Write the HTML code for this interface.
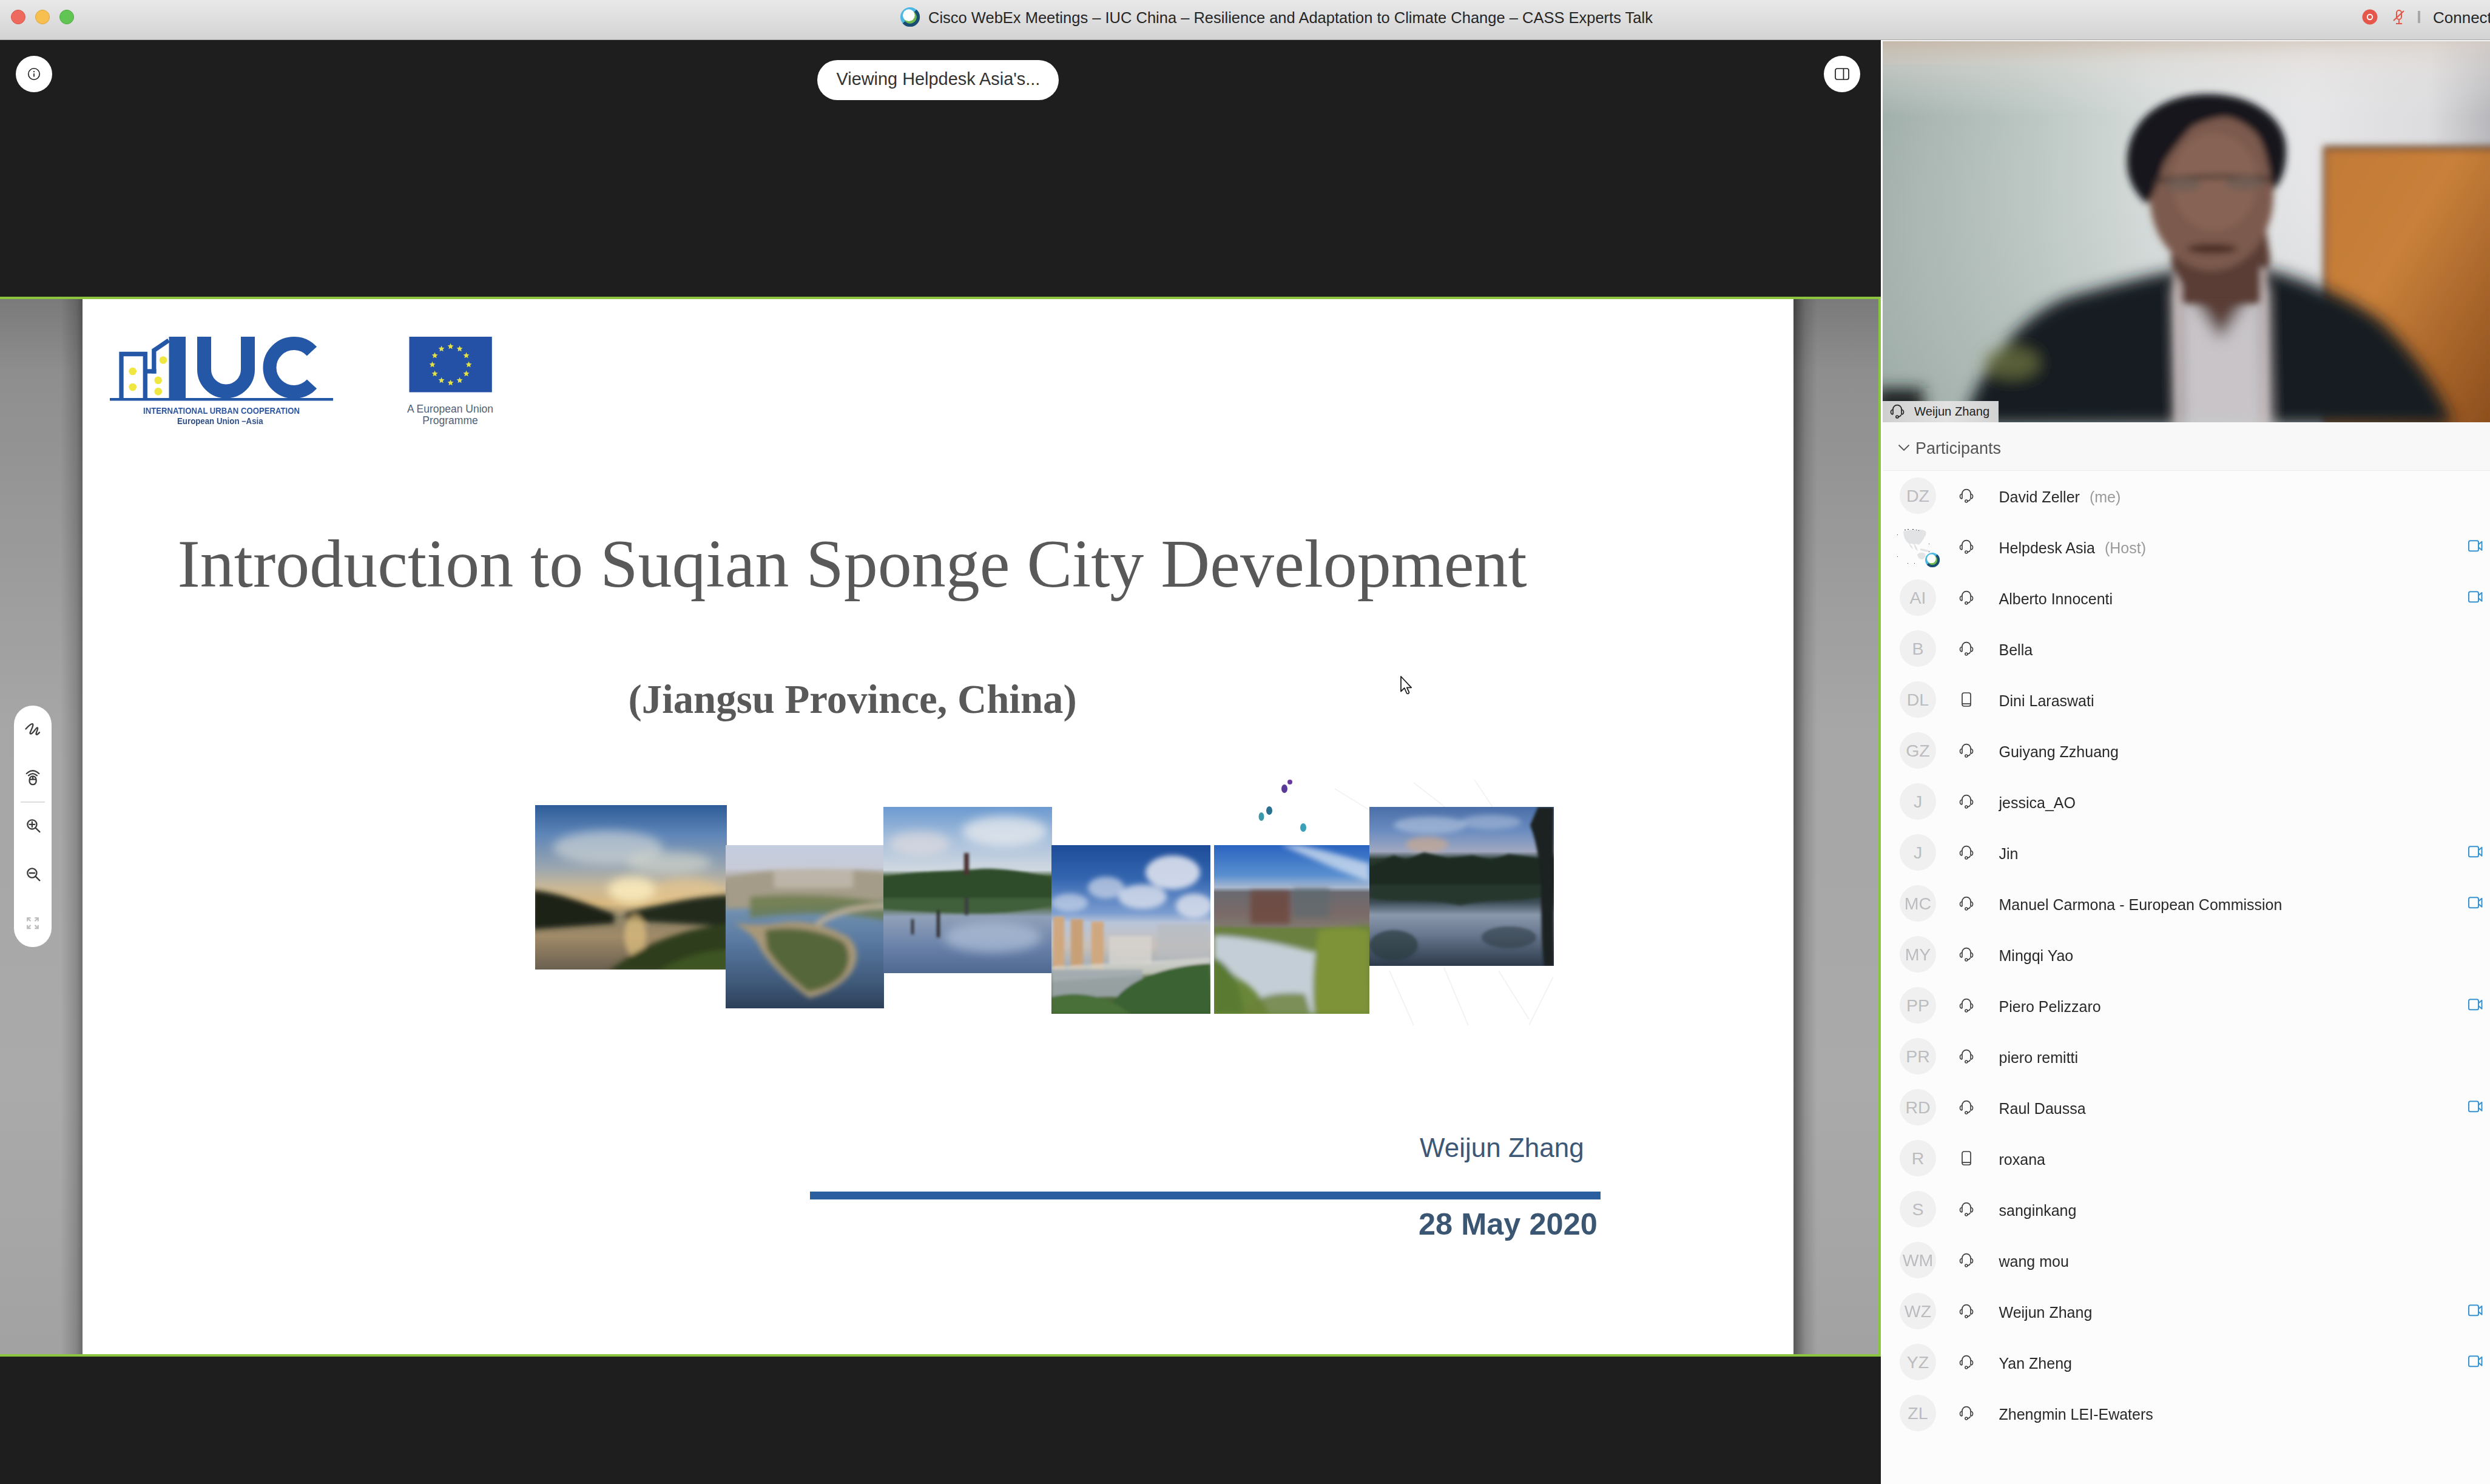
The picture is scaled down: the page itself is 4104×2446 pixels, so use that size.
<!DOCTYPE html>
<html><head><meta charset="utf-8">
<style>
*{box-sizing:border-box;margin:0;padding:0}
html,body{width:4104px;height:2446px;overflow:hidden;background:#1e1e1e;font-family:"Liberation Sans",sans-serif;position:relative}
.abs{position:absolute}
svg{position:absolute;overflow:visible}
#titlebar{left:0;top:0;width:4104px;height:66px;background:linear-gradient(#e9e9e9,#d3d3d3);border-bottom:1px solid #a9a9a9}
.tl{position:absolute;width:24px;height:24px;border-radius:50%;top:16px}
#ttl{left:1530px;top:14px;font-size:25.5px;color:#262626;white-space:nowrap;line-height:30px}
#connect{left:4010px;top:14px;font-size:26px;color:#262626;white-space:nowrap;line-height:30px}
#share{left:0;top:489px;width:3100px;height:1747px;border-top:4px solid #8bc43f;border-bottom:4px solid #8bc43f;border-right:4px solid #8bc43f;
 background:linear-gradient(90deg,rgba(0,0,0,0) 0,rgba(0,0,0,0) 100px,rgba(0,0,0,.18) 126px,rgba(0,0,0,.35) 136px,rgba(0,0,0,0) 2950px,rgba(0,0,0,.45) 2957px,rgba(0,0,0,.15) 2975px,rgba(0,0,0,0) 2995px),
 linear-gradient(#7a7a7a 0,#8e8e8e 120px,#a6a6a6 700px,#aaaaaa 1300px,#a2a2a2 100%)}
#slide{left:136px;top:493px;width:2820px;height:1739px;background:#fff;overflow:hidden}
.btn{position:absolute;width:60px;height:60px;border-radius:50%;background:#fff}
#pill{left:1347px;top:99px;width:398px;height:66px;border-radius:33px;background:#fff;font-size:28.9px;color:#333;line-height:62px;padding-left:31.5px;white-space:nowrap}
#tools{left:23px;top:1163px;width:62px;height:398px;border-radius:31px;background:#fff}
#panel{left:3100px;top:66px;width:1004px;height:2380px;z-index:-0;background:#fcfcfc;border-left:3px solid #fff}
#phead{left:3103px;top:696px;width:1001px;height:80px;background:#f8f8f8;border-bottom:1px solid #ececec}
#phead .t{position:absolute;left:54px;top:3px;line-height:80px;font-size:27px;color:#555}
.row{position:absolute;left:3100px;width:1004px;height:84px}
.av{position:absolute;left:31px;top:12px;width:60px;height:60px;border-radius:50%;background:#f0f0f0;color:#bbbcbf;font-size:28.5px;text-align:center;line-height:61px}
.nm{position:absolute;left:194.5px;top:2px;line-height:84px;font-size:25px;color:#292929;white-space:nowrap}
.nm span{color:#9a9a9a;margin-left:16px}

</style></head><body>
<div id="titlebar" class="abs">
  <div class="tl" style="left:18px;background:#ee6a5f;border:1px solid #d9564b"></div>
  <div class="tl" style="left:58px;background:#f6bf50;border:1px solid #dea53c"></div>
  <div class="tl" style="left:98px;background:#61c553;border:1px solid #4dab3e"></div>
  <svg style="left:1484px;top:12px" width="32" height="32" viewBox="0 0 24 24"><circle cx="12" cy="12" r="12" fill="#4bb7e5"/><path d="M18.43 4.34 A10 10 0 1 1 4.34 18.43" fill="none" stroke="#1b4d73" stroke-width="4.2"/><circle cx="12" cy="12" r="8" fill="#6cb84b"/><circle cx="10.4" cy="9.9" r="7.4" fill="#fff"/></svg>
  <div id="ttl" class="abs">Cisco WebEx Meetings – IUC China – Resilience and Adaptation to Climate Change – CASS Experts Talk</div>
  <svg style="left:3893px;top:15px" width="26" height="26" viewBox="0 0 26 26">
    <circle cx="13" cy="13" r="12.5" fill="#e5574a"/>
    <circle cx="13" cy="13" r="4.2" fill="none" stroke="#fff" stroke-width="2"/>
  </svg>
  <svg style="left:3943px;top:15px" width="22" height="26" viewBox="0 0 22 26">
    <rect x="7" y="2" width="8" height="15" rx="4" fill="none" stroke="#e5574a" stroke-width="2"/>
    <path d="M11 18 V23 M6 24 H16" stroke="#e5574a" stroke-width="2" fill="none"/>
    <path d="M2 19 L19 3" stroke="#e5574a" stroke-width="2.2" fill="none"/>
  </svg>
  <div class="abs" style="left:3985px;top:18px;width:4px;height:20px;background:#a8a8a8"></div>
  <div id="connect" class="abs">Connect</div>
</div>
<div id="share" class="abs"></div>
<div class="btn" style="left:26px;top:92px">
  <svg style="left:20px;top:20px" width="20" height="20" viewBox="0 0 20 20">
    <circle cx="10" cy="10" r="9.2" fill="none" stroke="#1e1e1e" stroke-width="1.6"/>
    <circle cx="10" cy="6.2" r="1.1" fill="#1e1e1e"/>
    <path d="M10 9 V14.5" stroke="#1e1e1e" stroke-width="1.7"/>
  </svg>
</div>
<div id="tools" class="abs"></div>
<svg style="left:0;top:0" width="100" height="1600" viewBox="0 0 100 1600">
<g fill="none" stroke="#3c3c3c" stroke-width="2.3" stroke-linecap="round" stroke-linejoin="round">
  <path d="M42.5 1201.5 C47 1196.5 51 1192.5 53.6 1193.2 C56.2 1194 51.5 1203 49.8 1207 C48.6 1210.2 51.5 1210.8 55 1206.5 C58 1202.8 60.8 1198.6 62 1199.6 C63.4 1200.8 59.2 1207.8 59.4 1209.8 C59.8 1212 62.8 1210 65 1207.2"/>
  <path d="M43.8 1275 Q54 1265.5 64.2 1275"/>
  <path d="M47 1278.3 Q54 1272 61 1278.3"/>
  <rect x="48.6" y="1279.4" width="11" height="13.8" rx="5.5"/>
  <path d="M48.6 1284.6 H59.6 M54.1 1279.4 V1284.6" stroke-linecap="butt"/>
  <circle cx="52.9" cy="1358.9" r="7.6"/><path d="M58.6 1364.6 L65.4 1371.2 M48.6 1358.9 H57.2 M52.9 1354.6 V1363.2"/>
  <circle cx="52.9" cy="1439" r="7.6"/><path d="M58.6 1444.7 L65.4 1451.3 M48.6 1439 H57.2"/>
</g>
<rect x="34" y="1321" width="40" height="2" fill="#dddddd"/>
<g fill="none" stroke="#bdbdbd" stroke-width="2.2">
  <path d="M45.2 1518.5 V1513 H50.7 M45.2 1513 L50.5 1518.3"/>
  <path d="M57.3 1513 H62.8 V1518.5 M62.8 1513 L57.5 1518.3"/>
  <path d="M45.2 1524.7 V1530.2 H50.7 M45.2 1530.2 L50.5 1524.9"/>
  <path d="M57.3 1530.2 H62.8 V1524.7 M62.8 1530.2 L57.5 1524.9"/>
</g>
</svg>
<div id="pill" class="abs">Viewing Helpdesk Asia's...</div>
<div class="btn" style="left:3006px;top:92px">
  <svg style="left:18px;top:20px" width="24" height="20" viewBox="0 0 24 20">
    <rect x="1" y="1" width="22" height="18" rx="3" fill="none" stroke="#1e1e1e" stroke-width="1.7"/>
    <path d="M14.5 1 V19" stroke="#1e1e1e" stroke-width="1.7"/>
  </svg>
</div>
<div id="slide" class="abs">
<svg style="left:0;top:0" width="700" height="230" viewBox="136 493 700 230">
  <g fill="#2457a5">
    <rect x="181" y="656" width="368" height="4.5"/>
    <rect x="278.5" y="555" width="27.5" height="101"/>
  </g>
  <g fill="none" stroke="#2457a5" stroke-width="7.3">
    <path d="M200 656 V583.5 H239.3 V656"/>
    <path d="M239.3 612 H257.5"/>
    <path d="M253.8 615.6 V577.5 L278 561"/>
  </g>
  <path d="M336.5 555 V609 A36 36 0 0 0 408.5 609 V555" fill="none" stroke="#2457a5" stroke-width="23"/>
  <path d="M514 579 A40 40 0 1 0 514 633" fill="none" stroke="#2457a5" stroke-width="22"/>
  <g fill="#efe640">
    <circle cx="218.7" cy="612" r="6.3"/><circle cx="218.7" cy="638" r="6.3"/>
    <circle cx="269" cy="593.5" r="6.3"/><circle cx="260.7" cy="626.7" r="6.3"/><circle cx="260.7" cy="645.3" r="6.3"/>
  </g>
  <rect x="674.5" y="555" width="136.3" height="91.5" fill="#2451a6"/>
  <g fill="#e3e04a"><polygon points="772.6,595.7 774.0,599.1 777.6,599.4 774.9,601.7 775.7,605.3 772.6,603.4 769.5,605.3 770.3,601.7 767.6,599.4 771.2,599.1"/><polygon points="768.6,610.7 770.0,614.1 773.6,614.4 770.8,616.7 771.7,620.3 768.6,618.4 765.5,620.3 766.3,616.7 763.5,614.4 767.2,614.1"/><polygon points="757.6,621.7 759.0,625.1 762.6,625.3 759.9,627.7 760.7,631.3 757.6,629.4 754.5,631.3 755.3,627.7 752.6,625.3 756.2,625.1"/><polygon points="742.6,625.7 744.0,629.1 747.6,629.4 744.9,631.7 745.7,635.3 742.6,633.4 739.5,635.3 740.3,631.7 737.6,629.4 741.2,629.1"/><polygon points="727.6,621.7 729.0,625.1 732.6,625.3 729.9,627.7 730.7,631.3 727.6,629.4 724.5,631.3 725.3,627.7 722.6,625.3 726.2,625.1"/><polygon points="716.6,610.7 718.0,614.1 721.7,614.4 718.9,616.7 719.7,620.3 716.6,618.4 713.5,620.3 714.4,616.7 711.6,614.4 715.2,614.1"/><polygon points="712.6,595.7 714.0,599.1 717.6,599.4 714.9,601.7 715.7,605.3 712.6,603.4 709.5,605.3 710.3,601.7 707.6,599.4 711.2,599.1"/><polygon points="716.6,580.7 718.0,584.1 721.7,584.4 718.9,586.7 719.7,590.3 716.6,588.4 713.5,590.3 714.4,586.7 711.6,584.4 715.2,584.1"/><polygon points="727.6,569.7 729.0,573.1 732.6,573.4 729.9,575.8 730.7,579.3 727.6,577.4 724.5,579.3 725.3,575.8 722.6,573.4 726.2,573.1"/><polygon points="742.6,565.7 744.0,569.1 747.6,569.4 744.9,571.7 745.7,575.3 742.6,573.4 739.5,575.3 740.3,571.7 737.6,569.4 741.2,569.1"/><polygon points="757.6,569.7 759.0,573.1 762.6,573.4 759.9,575.8 760.7,579.3 757.6,577.4 754.5,579.3 755.3,575.8 752.6,573.4 756.2,573.1"/><polygon points="768.6,580.7 770.0,584.1 773.6,584.4 770.8,586.7 771.7,590.3 768.6,588.4 765.5,590.3 766.3,586.7 763.5,584.4 767.2,584.1"/></g>
</svg>
<div class="abs" style="left:100px;top:175px;width:258px;font-size:15px;font-weight:bold;color:#2d56a0;white-space:nowrap;transform:scaleX(0.877);transform-origin:0 0;line-height:17px">INTERNATIONAL URBAN COOPERATION</div>
<div class="abs" style="left:156px;top:192px;font-size:15px;color:#2f4f86;white-space:nowrap;line-height:17px;font-weight:bold;transform:scaleX(0.885);transform-origin:0 0">European Union –Asia</div>
<div class="abs" style="left:535px;top:172px;width:142px;text-align:center;font-size:17.5px;color:#4f5f78;white-space:nowrap;line-height:19px">A European Union<br>Programme</div>

<div class="abs" id="t1" style="left:156.5px;top:380px;font-family:'Liberation Serif',serif;font-size:112px;color:#595959;white-space:nowrap;line-height:112px">Introduction to Suqian Sponge City Development</div>
<div class="abs" id="t2" style="left:899.5px;top:626px;font-family:'Liberation Serif',serif;font-size:66.8px;font-weight:bold;color:#595959;white-space:nowrap;line-height:66px">(Jiangsu Province, China)</div>

<div id="photos"><svg style="left:734px;top:787px" width="1710" height="410" viewBox="870 1280 1710 410"><defs><filter id="bl2" x="-20%" y="-20%" width="140%" height="140%"><feGaussianBlur stdDeviation="2"/></filter><filter id="bl4" x="-20%" y="-20%" width="140%" height="140%"><feGaussianBlur stdDeviation="4"/></filter><filter id="bl8" x="-30%" y="-30%" width="160%" height="160%"><feGaussianBlur stdDeviation="8"/></filter><clipPath id="c1"><rect x="882" y="1327" width="316" height="271"/></clipPath><clipPath id="c2"><rect x="1196" y="1393" width="261" height="269"/></clipPath><clipPath id="c3"><rect x="1456" y="1330" width="278" height="274"/></clipPath><clipPath id="c4"><rect x="1733" y="1393" width="262" height="278"/></clipPath><clipPath id="c5"><rect x="2001" y="1393" width="256" height="278"/></clipPath><clipPath id="c6"><rect x="2257" y="1330" width="304" height="262"/></clipPath><linearGradient id="g1" x1="0" y1="0" x2="0" y2="1"><stop offset="0" stop-color="#2d5c98"/><stop offset="0.18" stop-color="#5f86b8"/><stop offset="0.38" stop-color="#9aa6b0"/><stop offset="0.5" stop-color="#c9b898"/><stop offset="0.6" stop-color="#d8b77e"/><stop offset="0.68" stop-color="#8c8268"/><stop offset="0.8" stop-color="#a08a68"/><stop offset="1" stop-color="#6a6050"/></linearGradient><linearGradient id="g2" x1="0" y1="0" x2="0" y2="1"><stop offset="0" stop-color="#c4cde0"/><stop offset="0.14" stop-color="#c8cbd8"/><stop offset="0.22" stop-color="#a8a090"/><stop offset="0.32" stop-color="#8a8a70"/><stop offset="0.4" stop-color="#7090b0"/><stop offset="0.6" stop-color="#5878a0"/><stop offset="0.85" stop-color="#3e5878"/><stop offset="1" stop-color="#2e4058"/></linearGradient><linearGradient id="g3" x1="0" y1="0" x2="0" y2="1"><stop offset="0" stop-color="#6c9ad0"/><stop offset="0.2" stop-color="#a8c0dc"/><stop offset="0.38" stop-color="#d0d8e0"/><stop offset="0.42" stop-color="#3e5a34"/><stop offset="0.52" stop-color="#2e4a28"/><stop offset="0.6" stop-color="#506a48"/><stop offset="0.66" stop-color="#90a0b8"/><stop offset="0.85" stop-color="#6880a8"/><stop offset="1" stop-color="#4e6890"/></linearGradient><linearGradient id="g4" x1="0" y1="0" x2="0" y2="1"><stop offset="0" stop-color="#1e4c98"/><stop offset="0.2" stop-color="#3466b0"/><stop offset="0.4" stop-color="#7a9cd0"/><stop offset="0.46" stop-color="#b8c4d8"/><stop offset="0.6" stop-color="#c8c0b8"/><stop offset="0.7" stop-color="#a8b0b8"/><stop offset="0.8" stop-color="#6a7a50"/><stop offset="1" stop-color="#3a5a28"/></linearGradient><linearGradient id="g5" x1="0" y1="0" x2="0" y2="1"><stop offset="0" stop-color="#2a64c0"/><stop offset="0.18" stop-color="#5a90d0"/><stop offset="0.25" stop-color="#a8b8d0"/><stop offset="0.28" stop-color="#6a6a70"/><stop offset="0.4" stop-color="#7a6a68"/><stop offset="0.48" stop-color="#807870"/><stop offset="0.5" stop-color="#6a8040"/><stop offset="1" stop-color="#6a8a38"/></linearGradient><linearGradient id="g6" x1="0" y1="0" x2="0" y2="1"><stop offset="0" stop-color="#4a6ea8"/><stop offset="0.15" stop-color="#6a8cc0"/><stop offset="0.28" stop-color="#a0a8c0"/><stop offset="0.33" stop-color="#2a3a30"/><stop offset="0.46" stop-color="#1e2e26"/><stop offset="0.6" stop-color="#3e4e58"/><stop offset="0.68" stop-color="#8a98ac"/><stop offset="0.8" stop-color="#6a7890"/><stop offset="1" stop-color="#2c3a4a"/></linearGradient></defs><g stroke="#f3f3f3" stroke-width="2" fill="none"><path d="M2200 1300 L2330 1380 M2330 1290 L2420 1360 M2430 1285 L2460 1330 M2290 1600 L2330 1690 M2380 1595 L2420 1690 M2470 1600 L2520 1680 M2560 1610 L2520 1690"/></g><g clip-path="url(#c1)"><rect x="882" y="1327" width="316" height="271" fill="url(#g1)"/>
<g filter="url(#bl8)"><ellipse cx="1002" cy="1397" rx="90" ry="28" fill="#d8dcd8" opacity=".6"/><ellipse cx="1102" cy="1422" rx="70" ry="18" fill="#e0e0d0" opacity=".55"/>
<ellipse cx="1042" cy="1467" rx="40" ry="22" fill="#fff0c0" opacity=".8"/><ellipse cx="1132" cy="1477" rx="60" ry="30" fill="#e8c890" opacity=".6"/></g>
<g filter="url(#bl4)"><path d="M877 1467 C922 1472 962 1487 1012 1507 L1012 1522 L877 1532 Z" fill="#1e2418"/>
<path d="M1032 1505 C1082 1492 1142 1477 1202 1475 L1202 1527 L1032 1517 Z" fill="#232a1c"/>
<ellipse cx="1047" cy="1542" rx="18" ry="35" fill="#e0c080" opacity=".7"/>
<path d="M1002 1602 C1052 1562 1112 1532 1202 1522 L1202 1602 Z" fill="#2e3c1e"/>
<path d="M1082 1602 C1122 1577 1162 1567 1202 1565 L1202 1602 Z" fill="#3e5424"/></g></g><g clip-path="url(#c2)"><rect x="1196" y="1393" width="261" height="269" fill="url(#g2)"/>
<g filter="url(#bl4)"><path d="M1196 1448 C1256 1433 1346 1428 1461 1438 L1461 1483 C1396 1488 1316 1493 1196 1498 Z" fill="#a49c88"/>
<path d="M1236 1478 C1296 1473 1376 1473 1461 1488 L1461 1518 C1396 1503 1316 1503 1236 1513 Z" fill="#6a7a4a" opacity=".8"/>
<path d="M1210 1521 C1236 1525 1256 1525 1286 1521 C1326 1515 1356 1523 1396 1543 C1414 1558 1416 1578 1406 1598 C1391 1623 1361 1638 1334 1645 C1306 1625 1271 1593 1254 1565 C1246 1543 1226 1531 1210 1521 Z" fill="#a89878"/>
<path d="M1261 1533 C1306 1525 1356 1533 1391 1553 C1404 1573 1401 1593 1386 1611 C1366 1628 1346 1633 1332 1635 C1306 1615 1278 1588 1264 1563 Z" fill="#56663a"/>
<rect x="1276" y="1433" width="130" height="30" fill="#c8c0b8" opacity=".7"/>
<path d="M1346 1523 C1376 1503 1416 1493 1461 1493" stroke="#c0b098" stroke-width="8" fill="none"/></g></g><g clip-path="url(#c3)"><rect x="1456" y="1330" width="278" height="274" fill="url(#g3)"/>
<g filter="url(#bl8)"><ellipse cx="1656" cy="1370" rx="70" ry="25" fill="#f0f0f0" opacity=".7"/><ellipse cx="1516" cy="1390" rx="50" ry="20" fill="#e8e0e0" opacity=".6"/>
<ellipse cx="1636" cy="1545" rx="80" ry="25" fill="#b0c0d8" opacity=".7"/></g>
<g filter="url(#bl2)"><path d="M1456 1448 C1496 1435 1556 1438 1616 1432 C1656 1430 1706 1440 1734 1448 L1734 1480 L1456 1480 Z" fill="#2e4c2a"/>
<path d="M1456 1480 L1734 1480 L1734 1490 C1676 1510 1576 1508 1456 1498 Z" fill="#405e3a"/>
<rect x="1589" y="1406" width="8" height="36" fill="#4a3030"/><rect x="1590" y="1480" width="6" height="28" fill="#3a3a40"/>
<rect x="1544" y="1500" width="5" height="45" fill="#2a2a2a"/><rect x="1502" y="1515" width="4" height="25" fill="#2a2a2a"/></g></g><g clip-path="url(#c4)"><rect x="1733" y="1393" width="262" height="278" fill="url(#g4)"/>
<g filter="url(#bl4)"><ellipse cx="1933" cy="1438" rx="45" ry="28" fill="#e8eaf2" opacity=".85"/><ellipse cx="1883" cy="1478" rx="40" ry="20" fill="#dde2ee" opacity=".8"/><ellipse cx="1823" cy="1463" rx="30" ry="18" fill="#d0d8ea" opacity=".7"/><ellipse cx="1763" cy="1488" rx="30" ry="15" fill="#c8d4e8" opacity=".7"/><ellipse cx="1968" cy="1493" rx="30" ry="20" fill="#e0e4ee" opacity=".8"/></g>
<g filter="url(#bl2)"><rect x="1736" y="1511" width="18" height="88" fill="#d0a880"/><rect x="1765" y="1515" width="20" height="82" fill="#c8a078"/><rect x="1799" y="1519" width="20" height="78" fill="#d0a880"/>
<rect x="1828" y="1543" width="70" height="45" fill="#d8d4d0" opacity=".8"/><rect x="1908" y="1523" width="85" height="55" fill="#b8bcc0" opacity=".7"/>
<path d="M1733 1593 L1995 1578 L1995 1598 L1733 1618 Z" fill="#d8d8d0" opacity=".7"/>
<rect x="1733" y="1598" width="150" height="45" fill="#a0a8b0" opacity=".85"/>
<path d="M1823 1671 C1843 1623 1903 1593 1995 1588 L1995 1671 Z" fill="#3a6232"/>
<path d="M1733 1643 C1773 1633 1823 1638 1863 1671 L1733 1671 Z" fill="#4a7038"/></g></g><g clip-path="url(#c5)"><rect x="2001" y="1393" width="256" height="278" fill="url(#g5)"/>
<g filter="url(#bl4)"><path d="M2111 1393 C2161 1413 2211 1438 2257 1453 L2257 1423 C2221 1413 2171 1398 2141 1393 Z" fill="#e0e8f4" opacity=".7"/>
<rect x="2061" y="1468" width="65" height="55" fill="#6e4438" opacity=".75"/><rect x="2131" y="1463" width="60" height="50" fill="#5a6a70" opacity=".6"/>
<path d="M2001 1528 C2081 1533 2141 1543 2257 1523 L2257 1543 C2161 1568 2081 1555 2001 1545 Z" fill="#6a8040"/>
<path d="M2001 1543 C2041 1541 2121 1558 2176 1571 L2171 1671 L2091 1671 C2081 1643 2061 1623 2041 1613 L2001 1578 Z" fill="#c4ced6"/>
<path d="M2001 1578 C2031 1593 2043 1623 2051 1671 L2001 1671 Z" fill="#5a7a30"/>
<path d="M2046 1671 C2061 1643 2101 1633 2151 1638 L2161 1671 Z" fill="#6a8038" opacity=".8"/>
<path d="M2173 1533 C2201 1525 2241 1529 2257 1533 L2257 1671 L2166 1671 C2161 1623 2166 1573 2173 1533 Z" fill="#7e9238"/></g></g><g clip-path="url(#c6)"><rect x="2257" y="1330" width="304" height="262" fill="url(#g6)"/>
<g filter="url(#bl4)"><ellipse cx="2357" cy="1360" rx="60" ry="14" fill="#b8c8e0" opacity=".6"/><ellipse cx="2457" cy="1355" rx="50" ry="12" fill="#a8bcd8" opacity=".6"/><ellipse cx="2352" cy="1392" rx="35" ry="13" fill="#c8a890" opacity=".7"/></g>
<g filter="url(#bl2)"><path d="M2257 1428 L2277 1420 L2297 1410 L2317 1418 L2347 1405 L2387 1415 L2427 1410 L2457 1418 L2487 1408 L2517 1412 L2561 1420 L2561 1458 L2257 1458 Z" fill="#1c2a22"/>
<path d="M2257 1458 L2561 1458 L2561 1475 C2497 1490 2457 1480 2407 1492 C2357 1480 2297 1490 2257 1480 Z" fill="#28382e"/>
<ellipse cx="2297" cy="1558" rx="40" ry="25" fill="#2a3a40" opacity=".7"/><ellipse cx="2487" cy="1545" rx="45" ry="18" fill="#2e3e44" opacity=".6"/>
<path d="M2535 1330 L2561 1330 L2561 1592 L2545 1592 C2535 1510 2549 1430 2522 1360 Z" fill="#1a2420"/></g></g><g><ellipse cx="2117" cy="1300" rx="5" ry="7" fill="#5a3a98"/><ellipse cx="2126" cy="1289" rx="4" ry="4" fill="#6a3aa0"/>
<ellipse cx="2092" cy="1336" rx="5" ry="7" fill="#2a7090"/><ellipse cx="2079" cy="1346" rx="4.5" ry="7" fill="#3a98a8"/><ellipse cx="2148" cy="1364" rx="5" ry="7" fill="#3aa0b8"/></g></svg></div>

<div class="abs" id="t3" style="left:2204px;top:1377px;font-size:44px;color:#3c5876;white-space:nowrap;line-height:44px">Weijun Zhang</div>
<div class="abs" style="left:1199px;top:1471px;width:1303px;height:13px;background:#2a5e9f"></div>
<div class="abs" id="t4" style="left:2202px;top:1501px;font-size:50.5px;font-weight:bold;color:#3b5672;white-space:nowrap;line-height:48px">28 May 2020</div>

<svg style="left:2171px;top:620px" width="22" height="32" viewBox="0 0 22 32">
  <path d="M2 2 V26.5 L7.8 21 L11.5 29.5 Q12.8 31 14.5 30 Q16 29 15 27 L11.8 20.3 H19.2 Z" fill="#fff" stroke="#1f1f24" stroke-width="1.8" stroke-linejoin="round"/>
</svg>
</div>
<div id="panel" class="abs"></div>
<svg style="left:3103px;top:66px;overflow:hidden" width="1001" height="630" viewBox="3103 66 1001 630">
<defs>
  <linearGradient id="wall" x1="0" y1="0" x2="1" y2="0">
    <stop offset="0" stop-color="#a2b0ab"/><stop offset="0.25" stop-color="#bcc7c3"/><stop offset="0.45" stop-color="#d6dcdb"/><stop offset="0.7" stop-color="#e6e6e8"/><stop offset="0.9" stop-color="#dcdcde"/><stop offset="1" stop-color="#b8b8bc"/>
  </linearGradient>
  <linearGradient id="walltop" x1="0" y1="0" x2="0" y2="1">
    <stop offset="0" stop-color="#ddd2c8" stop-opacity=".6"/><stop offset="0.08" stop-color="#e6e0dc" stop-opacity=".4"/><stop offset="0.2" stop-color="#e8e8e8" stop-opacity="0"/><stop offset="1" stop-color="#8a9a94" stop-opacity=".25"/>
  </linearGradient>
  <linearGradient id="door" x1="0" y1="0" x2="1" y2="1">
    <stop offset="0" stop-color="#c27a38"/><stop offset="0.4" stop-color="#c8803a"/><stop offset="1" stop-color="#8a4c1c"/>
  </linearGradient>
  <linearGradient id="lbl" x1="0" y1="0" x2="1" y2="0">
    <stop offset="0" stop-color="#cfcfcf"/><stop offset="0.55" stop-color="#e2e2e2"/><stop offset="1" stop-color="#d2d2d2"/>
  </linearGradient>
  <linearGradient id="warm" x1="0" y1="0" x2="1" y2="1"><stop offset="0" stop-color="#c4b2a0" stop-opacity=".75"/><stop offset="0.45" stop-color="#d0c4b8" stop-opacity=".35"/><stop offset="0.8" stop-color="#e8e0e0" stop-opacity="0"/></linearGradient>
  <filter id="vb6" x="-20%" y="-20%" width="140%" height="140%"><feGaussianBlur stdDeviation="6"/></filter>
  <filter id="vb12" x="-20%" y="-20%" width="140%" height="140%"><feGaussianBlur stdDeviation="12"/></filter>
</defs>
<rect x="3103" y="66" width="1001" height="630" fill="url(#wall)"/>
<rect x="3103" y="66" width="1001" height="630" fill="url(#walltop)"/>
<rect x="3103" y="66" width="1001" height="40" fill="url(#warm)"/>
<g filter="url(#vb6)">
  <rect x="3835" y="246" width="280" height="460" fill="url(#door)"/>
  <rect x="3828" y="240" width="290" height="8" fill="#6a4a30"/>
  <rect x="3828" y="240" width="8" height="460" fill="#8a6040"/>
</g>
<g filter="url(#vb12)">
  <path d="M3236 700 C3260 610 3330 515 3415 488 C3490 468 3550 452 3590 446 L3745 446 C3810 465 3880 495 3925 530 C3985 590 4025 650 4042 700 Z" fill="#151a22"/>
  <path d="M3588 470 L3732 470 L3738 700 L3592 700 Z" fill="#c8c4c8"/><path d="M3600 470 L3660 560 L3720 470 Z" fill="#5a3c34"/>
  <ellipse cx="3316" cy="598" rx="45" ry="25" fill="#6a7040" opacity=".8"/>
  <rect x="3090" y="640" width="80" height="60" fill="#1e2022"/>
</g>
<g filter="url(#vb6)">
  <path d="M3578 425 L3590 500 L3730 500 L3742 425 L3735 380 L3585 380 Z" fill="#5a3c34"/>
  <ellipse cx="3645" cy="322" rx="102" ry="124" fill="#7c5a4e"/>
  <ellipse cx="3650" cy="270" rx="92" ry="85" fill="#7c5a4e"/>
  <ellipse cx="3650" cy="300" rx="70" ry="80" fill="#8a6658" opacity=".8"/>
  <path d="M3506 268 C3506 200 3560 155 3639 155 C3720 155 3770 200 3768 249 C3768 280 3760 300 3746 314 C3742 292 3740 280 3738 271 C3732 242 3724 226 3718 220 C3700 202 3682 194 3666 193 C3642 195 3624 203 3612 210 C3592 232 3574 256 3566 271 C3558 298 3550 320 3539 336 C3520 320 3506 295 3506 268 Z" fill="#17141a"/>
  <path d="M3548 300 C3590 290 3690 288 3745 296" stroke="#3a302c" stroke-width="6" fill="none"/>
  <ellipse cx="3598" cy="304" rx="30" ry="12" fill="#6e5c54" opacity=".8"/><ellipse cx="3700" cy="302" rx="32" ry="12" fill="#6e5c54" opacity=".8"/>
  <ellipse cx="3646" cy="410" rx="42" ry="8" fill="#4a2a22"/>
  <path d="M3582 445 L3596 470 L3596 700 L3586 700 Z M3726 440 L3736 445 L3738 700 L3726 700 Z" fill="#cfc2c2" opacity=".8"/>
</g>
<rect x="3103" y="661" width="191" height="35" fill="url(#lbl)"/>
<g fill="none" stroke="#262626" stroke-width="1.7" transform="translate(3112 664)">
  <path d="M8 19 V10.6 A7 7 0 0 1 22 10.6 V19"/><path d="M8 11 C3.3 12 3.3 18.4 8 19"/><path d="M22 11 C26.7 12 26.7 18.4 22 19"/><path d="M21.6 19.5 Q20.5 22.3 16.8 23.3"/><circle cx="14.9" cy="23" r="2"/>
</g>
</svg>
<div class="abs" style="left:3155px;top:666px;font-size:20.2px;color:#222;white-space:nowrap;line-height:24px">Weijun Zhang</div>
<div class="abs" style="left:3103px;top:66px;width:1001px;height:2px;background:#f4f4f4"></div>
<div id="phead" class="abs"><svg style="left:25px;top:36px" width="20" height="12" viewBox="0 0 20 12"><path d="M1.5 1.5 L10 10 L18.5 1.5" fill="none" stroke="#555" stroke-width="1.8"/></svg><div class="t">Participants</div></div>
<div class="row" style="top:775px"><div class="av">DZ</div><svg style="left:126px;top:28px" width="28" height="28" viewBox="0 0 28 28"><g fill="none" stroke="#3d3d3f" stroke-width="1.6"><path d="M8 19 V10.6 A7 7 0 0 1 22 10.6 V19"/><path d="M8 11 C3.3 12 3.3 18.4 8 19"/><path d="M22 11 C26.7 12 26.7 18.4 22 19"/><path d="M21.6 19.5 Q20.5 22.3 16.8 23.3"/><circle cx="14.9" cy="23" r="2"/></g></svg><div class="nm">David Zeller<span>(me)</span></div></div>
<div class="row" style="top:859px"><div class="abs" style="left:27px;top:8px;width:70px;height:70px">
<svg style="left:0;top:0" width="70" height="70" viewBox="0 0 70 70"><g fill="#e2e3e5">
<path d="M10 9 C18 6 30 5 40 6 C46 7 49 9 47 14 C44 16 46 20 42 23 C40 27 38 29 35 31 C33 30 30 29 28 31 C26 29 22 28 20 30 C16 26 12 22 11 16 Z"/>
<path d="M44 8 C47 10 48 14 46 18 C45 15 44 12 44 8 Z"/>
<path d="M20 29 C23 31 25 34 26 38 C24 38 22 35 20 31 Z"/>
<path d="M28 30 C31 32 33 36 34 41 C32 41 29 37 28 33 Z"/>
<path d="M38 37 C44 38 50 39 56 42 C50 43 44 42 38 40 Z"/>
<path d="M33 47 C37 43 43 43 46 46 C47 50 45 54 41 55 C37 55 34 52 33 47 Z"/>
</g><g fill="#333"><rect x="12" y="6" width="2" height="1"/><rect x="17" y="5" width="2" height="1"/><rect x="25" y="5" width="2" height="1"/><rect x="31" y="6" width="1" height="1"/><rect x="35" y="7" width="1" height="1"/><rect x="0" y="14" width="1" height="1"/><rect x="52" y="29" width="1" height="1"/><rect x="52" y="42" width="1" height="1"/><rect x="0" y="50" width="1" height="1"/><rect x="17" y="61" width="1" height="1"/><rect x="28" y="61" width="1" height="1"/></g></svg>
<svg style="left:46px;top:44px" width="24" height="24" viewBox="0 0 24 24"><circle cx="12" cy="12" r="12" fill="#4bb7e5"/><path d="M18.43 4.34 A10 10 0 1 1 4.34 18.43" fill="none" stroke="#1b4d73" stroke-width="4.2"/><circle cx="12" cy="12" r="8" fill="#6cb84b"/><circle cx="10.4" cy="9.9" r="7.4" fill="#fff"/></svg>
</div><svg style="left:126px;top:28px" width="28" height="28" viewBox="0 0 28 28"><g fill="none" stroke="#3d3d3f" stroke-width="1.6"><path d="M8 19 V10.6 A7 7 0 0 1 22 10.6 V19"/><path d="M8 11 C3.3 12 3.3 18.4 8 19"/><path d="M22 11 C26.7 12 26.7 18.4 22 19"/><path d="M21.6 19.5 Q20.5 22.3 16.8 23.3"/><circle cx="14.9" cy="23" r="2"/></g></svg><div class="nm">Helpdesk Asia<span>(Host)</span></div><svg style="left:968px;top:31px" width="24" height="20" viewBox="0 0 24 20"><g fill="none" stroke="#3893d1" stroke-width="2" stroke-linejoin="round"><rect x="1" y="1.2" width="16" height="17" rx="2.5"/><path d="M17 7.5 L22.5 2.8 V16.8 L17 12"/></g></svg></div>
<div class="row" style="top:943px"><div class="av">AI</div><svg style="left:126px;top:28px" width="28" height="28" viewBox="0 0 28 28"><g fill="none" stroke="#3d3d3f" stroke-width="1.6"><path d="M8 19 V10.6 A7 7 0 0 1 22 10.6 V19"/><path d="M8 11 C3.3 12 3.3 18.4 8 19"/><path d="M22 11 C26.7 12 26.7 18.4 22 19"/><path d="M21.6 19.5 Q20.5 22.3 16.8 23.3"/><circle cx="14.9" cy="23" r="2"/></g></svg><div class="nm">Alberto Innocenti</div><svg style="left:968px;top:31px" width="24" height="20" viewBox="0 0 24 20"><g fill="none" stroke="#3893d1" stroke-width="2" stroke-linejoin="round"><rect x="1" y="1.2" width="16" height="17" rx="2.5"/><path d="M17 7.5 L22.5 2.8 V16.8 L17 12"/></g></svg></div>
<div class="row" style="top:1027px"><div class="av">B</div><svg style="left:126px;top:28px" width="28" height="28" viewBox="0 0 28 28"><g fill="none" stroke="#3d3d3f" stroke-width="1.6"><path d="M8 19 V10.6 A7 7 0 0 1 22 10.6 V19"/><path d="M8 11 C3.3 12 3.3 18.4 8 19"/><path d="M22 11 C26.7 12 26.7 18.4 22 19"/><path d="M21.6 19.5 Q20.5 22.3 16.8 23.3"/><circle cx="14.9" cy="23" r="2"/></g></svg><div class="nm">Bella</div></div>
<div class="row" style="top:1111px"><div class="av">DL</div><svg style="left:133px;top:30px" width="16" height="24" viewBox="0 0 16 24"><g fill="none" stroke="#3d3d3f" stroke-width="1.7"><rect x="1" y="1" width="14" height="22" rx="3"/><path d="M1 19 H15"/></g></svg><div class="nm">Dini Laraswati</div></div>
<div class="row" style="top:1195px"><div class="av">GZ</div><svg style="left:126px;top:28px" width="28" height="28" viewBox="0 0 28 28"><g fill="none" stroke="#3d3d3f" stroke-width="1.6"><path d="M8 19 V10.6 A7 7 0 0 1 22 10.6 V19"/><path d="M8 11 C3.3 12 3.3 18.4 8 19"/><path d="M22 11 C26.7 12 26.7 18.4 22 19"/><path d="M21.6 19.5 Q20.5 22.3 16.8 23.3"/><circle cx="14.9" cy="23" r="2"/></g></svg><div class="nm">Guiyang Zzhuang</div></div>
<div class="row" style="top:1279px"><div class="av">J</div><svg style="left:126px;top:28px" width="28" height="28" viewBox="0 0 28 28"><g fill="none" stroke="#3d3d3f" stroke-width="1.6"><path d="M8 19 V10.6 A7 7 0 0 1 22 10.6 V19"/><path d="M8 11 C3.3 12 3.3 18.4 8 19"/><path d="M22 11 C26.7 12 26.7 18.4 22 19"/><path d="M21.6 19.5 Q20.5 22.3 16.8 23.3"/><circle cx="14.9" cy="23" r="2"/></g></svg><div class="nm">jessica_AO</div></div>
<div class="row" style="top:1363px"><div class="av">J</div><svg style="left:126px;top:28px" width="28" height="28" viewBox="0 0 28 28"><g fill="none" stroke="#3d3d3f" stroke-width="1.6"><path d="M8 19 V10.6 A7 7 0 0 1 22 10.6 V19"/><path d="M8 11 C3.3 12 3.3 18.4 8 19"/><path d="M22 11 C26.7 12 26.7 18.4 22 19"/><path d="M21.6 19.5 Q20.5 22.3 16.8 23.3"/><circle cx="14.9" cy="23" r="2"/></g></svg><div class="nm">Jin</div><svg style="left:968px;top:31px" width="24" height="20" viewBox="0 0 24 20"><g fill="none" stroke="#3893d1" stroke-width="2" stroke-linejoin="round"><rect x="1" y="1.2" width="16" height="17" rx="2.5"/><path d="M17 7.5 L22.5 2.8 V16.8 L17 12"/></g></svg></div>
<div class="row" style="top:1447px"><div class="av">MC</div><svg style="left:126px;top:28px" width="28" height="28" viewBox="0 0 28 28"><g fill="none" stroke="#3d3d3f" stroke-width="1.6"><path d="M8 19 V10.6 A7 7 0 0 1 22 10.6 V19"/><path d="M8 11 C3.3 12 3.3 18.4 8 19"/><path d="M22 11 C26.7 12 26.7 18.4 22 19"/><path d="M21.6 19.5 Q20.5 22.3 16.8 23.3"/><circle cx="14.9" cy="23" r="2"/></g></svg><div class="nm">Manuel Carmona - European Commission</div><svg style="left:968px;top:31px" width="24" height="20" viewBox="0 0 24 20"><g fill="none" stroke="#3893d1" stroke-width="2" stroke-linejoin="round"><rect x="1" y="1.2" width="16" height="17" rx="2.5"/><path d="M17 7.5 L22.5 2.8 V16.8 L17 12"/></g></svg></div>
<div class="row" style="top:1531px"><div class="av">MY</div><svg style="left:126px;top:28px" width="28" height="28" viewBox="0 0 28 28"><g fill="none" stroke="#3d3d3f" stroke-width="1.6"><path d="M8 19 V10.6 A7 7 0 0 1 22 10.6 V19"/><path d="M8 11 C3.3 12 3.3 18.4 8 19"/><path d="M22 11 C26.7 12 26.7 18.4 22 19"/><path d="M21.6 19.5 Q20.5 22.3 16.8 23.3"/><circle cx="14.9" cy="23" r="2"/></g></svg><div class="nm">Mingqi Yao</div></div>
<div class="row" style="top:1615px"><div class="av">PP</div><svg style="left:126px;top:28px" width="28" height="28" viewBox="0 0 28 28"><g fill="none" stroke="#3d3d3f" stroke-width="1.6"><path d="M8 19 V10.6 A7 7 0 0 1 22 10.6 V19"/><path d="M8 11 C3.3 12 3.3 18.4 8 19"/><path d="M22 11 C26.7 12 26.7 18.4 22 19"/><path d="M21.6 19.5 Q20.5 22.3 16.8 23.3"/><circle cx="14.9" cy="23" r="2"/></g></svg><div class="nm">Piero Pelizzaro</div><svg style="left:968px;top:31px" width="24" height="20" viewBox="0 0 24 20"><g fill="none" stroke="#3893d1" stroke-width="2" stroke-linejoin="round"><rect x="1" y="1.2" width="16" height="17" rx="2.5"/><path d="M17 7.5 L22.5 2.8 V16.8 L17 12"/></g></svg></div>
<div class="row" style="top:1699px"><div class="av">PR</div><svg style="left:126px;top:28px" width="28" height="28" viewBox="0 0 28 28"><g fill="none" stroke="#3d3d3f" stroke-width="1.6"><path d="M8 19 V10.6 A7 7 0 0 1 22 10.6 V19"/><path d="M8 11 C3.3 12 3.3 18.4 8 19"/><path d="M22 11 C26.7 12 26.7 18.4 22 19"/><path d="M21.6 19.5 Q20.5 22.3 16.8 23.3"/><circle cx="14.9" cy="23" r="2"/></g></svg><div class="nm">piero remitti</div></div>
<div class="row" style="top:1783px"><div class="av">RD</div><svg style="left:126px;top:28px" width="28" height="28" viewBox="0 0 28 28"><g fill="none" stroke="#3d3d3f" stroke-width="1.6"><path d="M8 19 V10.6 A7 7 0 0 1 22 10.6 V19"/><path d="M8 11 C3.3 12 3.3 18.4 8 19"/><path d="M22 11 C26.7 12 26.7 18.4 22 19"/><path d="M21.6 19.5 Q20.5 22.3 16.8 23.3"/><circle cx="14.9" cy="23" r="2"/></g></svg><div class="nm">Raul Daussa</div><svg style="left:968px;top:31px" width="24" height="20" viewBox="0 0 24 20"><g fill="none" stroke="#3893d1" stroke-width="2" stroke-linejoin="round"><rect x="1" y="1.2" width="16" height="17" rx="2.5"/><path d="M17 7.5 L22.5 2.8 V16.8 L17 12"/></g></svg></div>
<div class="row" style="top:1867px"><div class="av">R</div><svg style="left:133px;top:30px" width="16" height="24" viewBox="0 0 16 24"><g fill="none" stroke="#3d3d3f" stroke-width="1.7"><rect x="1" y="1" width="14" height="22" rx="3"/><path d="M1 19 H15"/></g></svg><div class="nm">roxana</div></div>
<div class="row" style="top:1951px"><div class="av">S</div><svg style="left:126px;top:28px" width="28" height="28" viewBox="0 0 28 28"><g fill="none" stroke="#3d3d3f" stroke-width="1.6"><path d="M8 19 V10.6 A7 7 0 0 1 22 10.6 V19"/><path d="M8 11 C3.3 12 3.3 18.4 8 19"/><path d="M22 11 C26.7 12 26.7 18.4 22 19"/><path d="M21.6 19.5 Q20.5 22.3 16.8 23.3"/><circle cx="14.9" cy="23" r="2"/></g></svg><div class="nm">sanginkang</div></div>
<div class="row" style="top:2035px"><div class="av">WM</div><svg style="left:126px;top:28px" width="28" height="28" viewBox="0 0 28 28"><g fill="none" stroke="#3d3d3f" stroke-width="1.6"><path d="M8 19 V10.6 A7 7 0 0 1 22 10.6 V19"/><path d="M8 11 C3.3 12 3.3 18.4 8 19"/><path d="M22 11 C26.7 12 26.7 18.4 22 19"/><path d="M21.6 19.5 Q20.5 22.3 16.8 23.3"/><circle cx="14.9" cy="23" r="2"/></g></svg><div class="nm">wang mou</div></div>
<div class="row" style="top:2119px"><div class="av">WZ</div><svg style="left:126px;top:28px" width="28" height="28" viewBox="0 0 28 28"><g fill="none" stroke="#3d3d3f" stroke-width="1.6"><path d="M8 19 V10.6 A7 7 0 0 1 22 10.6 V19"/><path d="M8 11 C3.3 12 3.3 18.4 8 19"/><path d="M22 11 C26.7 12 26.7 18.4 22 19"/><path d="M21.6 19.5 Q20.5 22.3 16.8 23.3"/><circle cx="14.9" cy="23" r="2"/></g></svg><div class="nm">Weijun Zhang</div><svg style="left:968px;top:31px" width="24" height="20" viewBox="0 0 24 20"><g fill="none" stroke="#3893d1" stroke-width="2" stroke-linejoin="round"><rect x="1" y="1.2" width="16" height="17" rx="2.5"/><path d="M17 7.5 L22.5 2.8 V16.8 L17 12"/></g></svg></div>
<div class="row" style="top:2203px"><div class="av">YZ</div><svg style="left:126px;top:28px" width="28" height="28" viewBox="0 0 28 28"><g fill="none" stroke="#3d3d3f" stroke-width="1.6"><path d="M8 19 V10.6 A7 7 0 0 1 22 10.6 V19"/><path d="M8 11 C3.3 12 3.3 18.4 8 19"/><path d="M22 11 C26.7 12 26.7 18.4 22 19"/><path d="M21.6 19.5 Q20.5 22.3 16.8 23.3"/><circle cx="14.9" cy="23" r="2"/></g></svg><div class="nm">Yan Zheng</div><svg style="left:968px;top:31px" width="24" height="20" viewBox="0 0 24 20"><g fill="none" stroke="#3893d1" stroke-width="2" stroke-linejoin="round"><rect x="1" y="1.2" width="16" height="17" rx="2.5"/><path d="M17 7.5 L22.5 2.8 V16.8 L17 12"/></g></svg></div>
<div class="row" style="top:2287px"><div class="av">ZL</div><svg style="left:126px;top:28px" width="28" height="28" viewBox="0 0 28 28"><g fill="none" stroke="#3d3d3f" stroke-width="1.6"><path d="M8 19 V10.6 A7 7 0 0 1 22 10.6 V19"/><path d="M8 11 C3.3 12 3.3 18.4 8 19"/><path d="M22 11 C26.7 12 26.7 18.4 22 19"/><path d="M21.6 19.5 Q20.5 22.3 16.8 23.3"/><circle cx="14.9" cy="23" r="2"/></g></svg><div class="nm">Zhengmin LEI-Ewaters</div></div>

</body></html>
